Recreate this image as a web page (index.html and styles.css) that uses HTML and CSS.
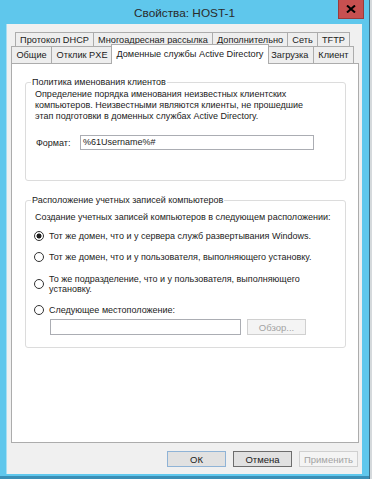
FILE: index.html
```html
<!DOCTYPE html>
<html lang="ru">

<head>
    <meta charset="UTF-8">
    <meta name="viewport" content="width=device-width, initial-scale=1.0">
    <title>Свойства: HOST-1</title>
    <link rel="stylesheet" href="styles.css">
</head>

<body>
    <div class="window">
        <div class="titlebar">
            <span class="title">Свойства: HOST-1</span>
            <span class="close-btn">
                <svg width="10" height="8" viewBox="0 0 10 8">
                    <path d="M1 0.5 L9 7.5 M9 0.5 L1 7.5" stroke="#000" stroke-width="2" />
                </svg>
            </span>
        </div>

        <div class="client">
            <!-- two rows of tabs, the front row touches the panel -->
            <div class="tabs">
                <div class="tab-row row-back">
                    <div class="tab">Протокол DHCP</div>
                    <div class="tab">Многоадресная рассылка</div>
                    <div class="tab">Дополнительно</div>
                    <div class="tab">Сеть</div>
                    <div class="tab">TFTP</div>
                </div>
                <div class="tab-row row-front">
                    <div class="tab">Общие</div>
                    <div class="tab">Отклик PXE</div>
                    <div class="tab active">Доменные службы Active Directory</div>
                    <div class="tab">Загрузка</div>
                    <div class="tab">Клиент</div>
                </div>
            </div>

            <div class="panel">
                <fieldset class="group group-naming">
                    <legend>Политика именования клиентов</legend>
                    <p class="desc">
                        Определение порядка именования неизвестных клиентских<br>
                        компьютеров. Неизвестными являются клиенты, не прошедшие<br>
                        этап подготовки в доменных службах Active Directory.
                    </p>
                    <div class="format-row">
                        <label class="format-label">Формат:</label>
                        <div class="textbox format-box">%61Username%#</div>
                    </div>
                </fieldset>

                <fieldset class="group group-location">
                    <legend>Расположение учетных записей компьютеров</legend>
                    <p class="intro">Создание учетных записей компьютеров в следующем расположении:</p>
                    <ul class="radio-list">
                        <li class="radio-item">
                            <span class="radio checked"></span>
                            <span>Тот же домен, что и у сервера служб развертывания Windows.</span>
                        </li>
                        <li class="radio-item">
                            <span class="radio"></span>
                            <span>Тот же домен, что и у пользователя, выполняющего установку.</span>
                        </li>
                        <li class="radio-item">
                            <span class="radio"></span>
                            <span>То же подразделение, что и у пользователя, выполняющего<br>установку.</span>
                        </li>
                        <li class="radio-item">
                            <span class="radio"></span>
                            <span>Следующее местоположение:</span>
                        </li>
                    </ul>
                    <div class="browse-row">
                        <div class="textbox location-box"></div>
                        <button class="btn btn-disabled browse-btn">Обзор...</button>
                    </div>
                </fieldset>
            </div>

            <div class="buttons">
                <button class="btn btn-default">ОК</button>
                <button class="btn btn-focus">Отмена</button>
                <button class="btn btn-disabled">Применить</button>
            </div>
        </div>
    </div>
</body>

</html>
```

FILE: styles.css
```css
body {
    margin: 0;
    padding: 0;
    background-color: #d5d9dc;
    font-family: 'Liberation Sans', Arial, sans-serif;
    font-size: 9px;
    color: #1b1b1b;
}

.window {
    width: 369px;
    height: 479px;
    box-sizing: border-box;
    display: flex;
    flex-direction: column;
    padding: 0 7px 2px 7px;
    background-color: #5fc7ec;
    border-bottom: 3px solid #3a8fb6;
    box-shadow: 1px 0 0 #3d6f87;
}

/* title bar */
.titlebar {
    height: 24px;
    flex-shrink: 0;
    margin: 0 -7px;
    display: grid;
    grid-template-columns: 1fr auto 1fr;
    align-items: start;
}

.title {
    grid-column: 2;
    font-size: 11.8px;
    line-height: 24px;
    color: #2a2a2a;
    padding-top: 1px;
}

.close-btn {
    grid-column: 3;
    justify-self: end;
    width: 26px;
    height: 19px;
    margin-right: 5px;
    box-sizing: border-box;
    background-color: #c75050;
    border: 1px solid #9a3b3b;
    border-top: none;
    display: flex;
    align-items: center;
    justify-content: center;
}

.client {
    flex: 1;
    display: flex;
    flex-direction: column;
    padding: 8px 3px 7px 4px;
    background-color: #f0f0f0;
    border-left: 1px solid #a6def2;
    margin-left: -1px;
}

/* tabs */
.tabs {
    flex-shrink: 0;
}

.tab-row {
    display: flex;
    height: 15px;
}

.row-back {
    margin: 0 9px 0 4px;
}

.row-front {
    margin-right: 5px;
    height: 16px;
}

.tab {
    flex: 1 1 auto;
    min-width: 0;
    padding: 0 3px;
    font-size: 9.2px;
    text-align: center;
    white-space: nowrap;
    overflow: hidden;
    line-height: 14px;
    background-color: #eeeeee;
    border: 1px solid #acacac;
    border-bottom: none;
    margin-left: -1px;
}

.tab:first-child {
    margin-left: 0;
}

.row-front .tab {
    line-height: 16px;
    margin-top: -1px;
}

.tab.active {
    position: relative;
    z-index: 1;
    background-color: #fff;
    margin: -3px -2px -1px -2px;
    line-height: 18px;
}

.panel {
    flex: 1;
    background-color: #fff;
    border: 1px solid #acacac;
    padding: 0 12px 0 13px;
}

/* group boxes */
.group {
    margin: 13px 0 0 0;
    padding: 0 9px;
    border: 1px solid #dcdcdc;
    border-radius: 3px;
}

.group legend {
    padding: 0 1px;
    margin-left: -4px;
    line-height: 11px;
}

.group-naming {
    padding-bottom: 30px;
}

.group-location {
    margin-top: 14px;
    padding-bottom: 12px;
}

.desc {
    margin: 1px 0 0 0;
    line-height: 11px;
    white-space: nowrap;
}

.format-row {
    display: flex;
    align-items: center;
    margin-top: 13px;
}

.format-label {
    width: 45px;
    padding-left: 1px;
    box-sizing: border-box;
}

.textbox {
    height: 15px;
    box-sizing: border-box;
    border: 1px solid #abadb3;
    background-color: #fff;
    line-height: 13px;
    padding-left: 2px;
}

.format-box {
    width: 234px;
}

.intro {
    margin: 6px 0 0 0;
    line-height: 11px;
    white-space: nowrap;
}

.radio-list {
    list-style: none;
    margin: 8px 0 0 0;
    padding: 0;
}

.radio-item {
    display: flex;
    align-items: flex-start;
    white-space: nowrap;
    line-height: 10px;
    margin-bottom: 11px;
}

.radio-item:nth-child(2) {
    margin-bottom: 12px;
}

.radio-item:last-child {
    margin-bottom: 0;
}

.radio {
    width: 10px;
    height: 10px;
    box-sizing: border-box;
    margin: 0 5px 0 -1px;
    border: 1px solid #333;
    border-radius: 50%;
    background-color: #fff;
    flex-shrink: 0;
}

.radio-item:nth-child(3) .radio {
    margin-top: 5px;
}

.radio.checked {
    background: radial-gradient(circle, #1e1e1e 0 2.2px, #fff 2.8px);
}

.browse-row {
    display: flex;
    margin: 4px 0 0 15px;
    gap: 6px;
}

.location-box {
    width: 191px;
    height: 16px;
}

/* buttons */
.btn {
    font-family: inherit;
    font-size: 9.5px;
    width: 59px;
    height: 16px;
    padding: 0;
    background-color: #e1e1e1;
    border: 1px solid #adadad;
    color: #1b1b1b;
}

.btn-disabled {
    background-color: #f4f4f4;
    border-color: #d0d0d0;
    color: #a3a3a3;
}

.btn-default {
    border-color: #8fb3d6;
}

.btn-focus {
    border-color: #6d6d6d;
}

.buttons {
    display: flex;
    justify-content: flex-end;
    gap: 7px;
    margin-top: 8px;
    padding-right: 1px;
}
```
